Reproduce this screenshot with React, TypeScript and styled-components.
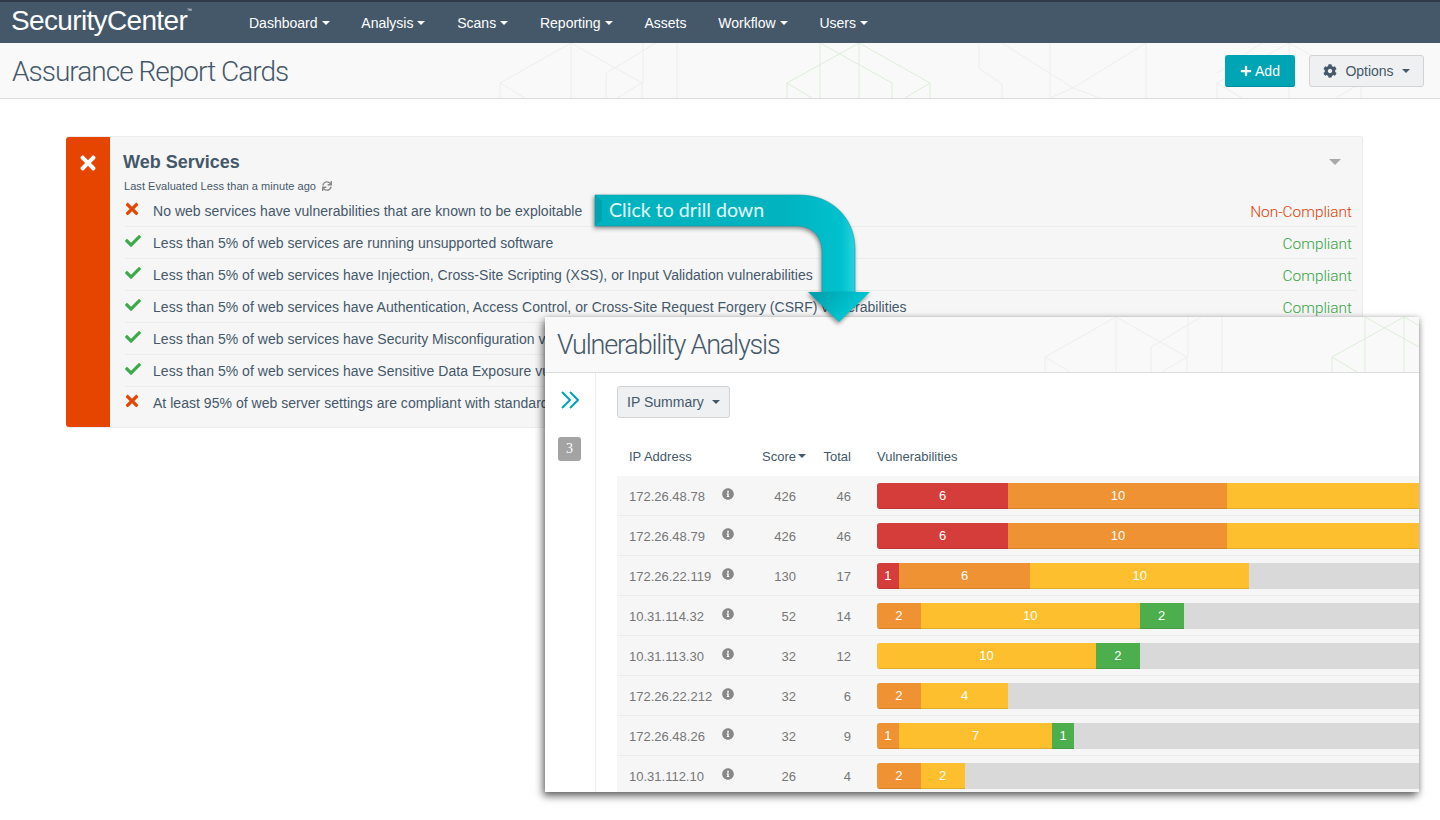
import { FunctionComponent } from "react";
import styled, { createGlobalStyle } from "styled-components";
import { FaCheck, FaCog, FaInfoCircle, FaPlus, FaSync, FaTimes } from "react-icons/fa";

const SANS = `"Liberation Sans", Arial, sans-serif`;
const LIGHT = `Roboto, "Liberation Sans", sans-serif`;

const Global = createGlobalStyle`
    html, body {
        margin: 0;
        height: 820px;
        overflow: hidden;
        background: #fff;
        font-family: ${SANS};
    }
`

const Page = styled.div`
    position: relative;
    width: 1440px;
    height: 820px;
    overflow: hidden;
`

const NavBar = styled.div`
    display: flex;
    align-items: center;
    height: 41px;
    border-top: 2px solid #2f3b48;
    background: #44586a;
    color: #fff;
`

const Logo = styled.div`
    flex: none;
    width: 249px;
    padding-left: 11px;
    box-sizing: border-box;
    font-size: 28px;
    letter-spacing: -0.65px;
    margin-top: -4px;
    sup {
        font-size: 5px;
        vertical-align: 18px;
    }
`

const NavItems = styled.div`
    display: flex;
    gap: 31.8px;
`

const NavItem = styled.div`
    display: flex;
    align-items: center;
    gap: 4px;
    font-size: 14px;
`

const Caret = styled.i<{ $size?: number, $color?: string }>`
    display: block;
    width: 0;
    height: 0;
    border-style: solid;
    border-color: ${p => p.$color || "currentColor"} transparent transparent;
    border-width: ${p => p.$size || 4}px ${p => p.$size || 4}px 0;
`

const PageHead = styled.div`
    position: relative;
    display: flex;
    align-items: center;
    justify-content: space-between;
    height: 55px;
    padding: 0 16px 0 12px;
    background: #f9f9f9;
    border-bottom: 1px solid #dcdcdc;
    overflow: hidden;
`

const PageTitle = styled.div`
    position: relative;
    margin-top: 1px;
    font-family: ${LIGHT};
    font-weight: 300;
    font-size: 28px;
    letter-spacing: -0.98px;
    color: #44586a;
`

const Pattern = styled.svg`
    position: absolute;
    left: 0;
    top: 0;
    width: 1440px;
    height: 55px;
    fill: none;
`

const HeadActions = styled.div`
    position: relative;
    display: flex;
    gap: 14px;
`

const AddButton = styled.div`
    display: flex;
    align-items: center;
    justify-content: center;
    gap: 3px;
    width: 70px;
    height: 32px;
    border-radius: 3px;
    background: #00a5b5;
    box-shadow: inset 0 -1px 0 #008d9b;
    color: #fff;
    font-size: 14px;
`

const GreyButton = styled.div<{ $width: number }>`
    display: flex;
    align-items: center;
    justify-content: center;
    gap: 8px;
    width: ${p => p.$width}px;
    height: 32px;
    box-sizing: border-box;
    border: 1px solid #d0d2d4;
    border-radius: 3px;
    background: #eef0f2;
    color: #44586a;
    font-size: 14px;
`

const Card = styled.div`
    display: flex;
    width: 1297px;
    height: 292px;
    margin: 37px 0 0 66px;
    box-sizing: border-box;
    border: 1px solid #ececec;
    border-left: 0;
    border-radius: 3px;
    background: #f6f6f6;
`

const CardFlag = styled.div`
    display: flex;
    justify-content: center;
    flex: none;
    width: 44px;
    padding-top: 15px;
    box-sizing: border-box;
    border-radius: 3px 0 0 3px;
    background: #e64500;
    color: #fff;
    font-size: 22px;
`

const CardBody = styled.div`
    flex: 1;
    padding: 0 5px 0 15px;
`

const CardHead = styled.div`
    display: flex;
    align-items: flex-start;
    justify-content: space-between;
    height: 40px;
    box-sizing: border-box;
    padding: 15px 16px 0 0;
    margin-left: -2px;
`

const CardTitle = styled.div`
    font-size: 18px;
    font-weight: bold;
    color: #44586a;
`

const CardCaret = styled(Caret)`
    margin-top: 7px;
`

const Evaluated = styled.div`
    display: flex;
    align-items: center;
    gap: 6px;
    height: 18px;
    margin-left: -1px;
    font-size: 11px;
    letter-spacing: 0.05px;
    color: #44586a;
    svg {
        color: #888;
    }
`

const Rule = styled.div`
    display: flex;
    align-items: center;
    height: 31px;
    padding-right: 5px;
    border-bottom: 1px solid #ececec;
    font-size: 14px;
    letter-spacing: 0.03px;
    color: #44586a;
    &:last-child {
        border-bottom: 0;
    }
`

const RuleIcon = styled.div<{ $ok: boolean }>`
    display: flex;
    flex: none;
    width: ${p => p.$ok ? 28 : 30}px;
    margin: -4px 0 0 ${p => p.$ok ? 0 : -2}px;
    font-size: ${p => p.$ok ? 16 : 18}px;
    color: ${p => p.$ok ? "#3eaa4c" : "#e64500"};
`

const RuleText = styled.div`
    flex: 1;
    white-space: nowrap;
`

const RuleStatus = styled.div<{ $ok: boolean }>`
    font-family: ${LIGHT};
    font-weight: 300;
    font-size: 15.4px;
    letter-spacing: 0;
    margin-top: 3px;
    color: ${p => p.$ok ? "#2fa53f" : "#e03c00"};
`

const Panel = styled.div`
    position: absolute;
    left: 545px;
    top: 317px;
    width: 874px;
    height: 475px;
    overflow: hidden;
    background: #fff;
    box-shadow: -2px 4px 8px rgba(0, 0, 0, 0.6), 1px 0 5px rgba(0, 0, 0, 0.15);
`

const PanelTitle = styled(PageTitle)`
    margin-top: 0;
    font-size: 27px;
    letter-spacing: -1.2px;
`

const PanelMain = styled.div`
    display: flex;
    height: 420px;
`

const Side = styled.div`
    display: flex;
    flex-direction: column;
    align-items: center;
    flex: none;
    width: 50px;
    padding: 18px 0 0 0;
    border-right: 1px solid #eceeef;
`

const SideArrows = styled.svg`
    display: block;
    width: 18px;
    height: 18px;
    fill: none;
    stroke: #00a5b5;
    stroke-width: 2;
`

const SideBadge = styled.div`
    display: flex;
    align-items: center;
    justify-content: center;
    width: 23px;
    height: 24px;
    margin: 28px 1px 0 0;
    border-radius: 3px;
    background: #a3a3a3;
    color: #fff;
    font-family: "Liberation Serif", serif;
    font-size: 14px;
`

const Content = styled.div`
    flex: 1;
    padding: 13px 0 0 21px;
`

const RowGrid = `
    display: grid;
    grid-template-columns: 93px 12px 62px 55px 1100px;
    align-items: center;
    padding-left: 12px;
`

const HeadRow = styled.div`
    ${RowGrid}
    height: 58px;
    padding-top: 18px;
    box-sizing: border-box;
    font-size: 13px;
    color: #44586a;
`

const HeadScore = styled.div`
    display: flex;
    align-items: center;
    justify-content: flex-end;
    gap: 2px;
    margin-right: -10px;
`

const HeadTotal = styled.div`
    text-align: right;
`

const HeadVuln = styled.div`
    padding-left: 26px;
`

const Row = styled.div`
    ${RowGrid}
    height: 40px;
    padding-top: 1px;
    box-sizing: border-box;
    border-bottom: 1px solid #ececec;
    background: #f6f6f6;
    font-size: 13px;
    color: #777;
`

const Info = styled.div`
    display: flex;
    margin-top: -4px;
    font-size: 12px;
    color: #888;
`

const Num = styled.div`
    text-align: right;
`

const Bar = styled.div`
    display: flex;
    height: 26px;
    margin: -1px 0 0 26px;
    border-radius: 3px;
    overflow: hidden;
    background: #d9d9d9;
`

const Segment = styled.div<{ $n: number, $color: string }>`
    flex: none;
    width: ${p => p.$n * 21.9}px;
    background: ${p => p.$color};
    box-shadow: inset 0 -1px 0 rgba(0, 0, 0, 0.1);
    color: #fff;
    font-size: 13px;
    line-height: 25px;
    text-align: center;
`

const Callout = styled.div`
    position: absolute;
    left: 594px;
    top: 194px;
    width: 280px;
    height: 132px;
`

const CalloutArrow = styled.svg`
    position: absolute;
    left: 0;
    top: 0;
    width: 280px;
    height: 132px;
    overflow: visible;
    filter: drop-shadow(-1px 2px 2px rgba(0, 0, 0, 0.45));
`

const CalloutText = styled.div`
    position: relative;
    padding: 4px 0 0 15px;
    font-family: Lato, sans-serif;
    font-size: 19.6px;
    color: #e4fbfc;
`

const SEVERITY: { [k: string]: string } = {
    r: "#d43d3a",
    o: "#ef9234",
    y: "#fdbf2d",
    g: "#4cae4c",
}

const RULES = [
    { ok: false, text: "No web services have vulnerabilities that are known to be exploitable" },
    { ok: true, text: "Less than 5% of web services are running unsupported software" },
    { ok: true, text: "Less than 5% of web services have Injection, Cross-Site Scripting (XSS), or Input Validation vulnerabilities" },
    { ok: true, text: "Less than 5% of web services have Authentication, Access Control, or Cross-Site Request Forgery (CSRF) vulnerabilities" },
    { ok: true, text: "Less than 5% of web services have Security Misconfiguration vulnerabilities" },
    { ok: true, text: "Less than 5% of web services have Sensitive Data Exposure vulnerabilities" },
    { ok: false, text: "At least 95% of web server settings are compliant with standards" },
]

const HOSTS: { ip: string, score: number, total: number, bars: [string, number][] }[] = [
    { ip: "172.26.48.78", score: 426, total: 46, bars: [["r", 6], ["o", 10], ["y", 30]] },
    { ip: "172.26.48.79", score: 426, total: 46, bars: [["r", 6], ["o", 10], ["y", 30]] },
    { ip: "172.26.22.119", score: 130, total: 17, bars: [["r", 1], ["o", 6], ["y", 10]] },
    { ip: "10.31.114.32", score: 52, total: 14, bars: [["o", 2], ["y", 10], ["g", 2]] },
    { ip: "10.31.113.30", score: 32, total: 12, bars: [["y", 10], ["g", 2]] },
    { ip: "172.26.22.212", score: 32, total: 6, bars: [["o", 2], ["y", 4]] },
    { ip: "172.26.48.26", score: 32, total: 9, bars: [["o", 1], ["y", 7], ["g", 1]] },
    { ip: "10.31.112.10", score: 26, total: 4, bars: [["o", 2], ["y", 2]] },
]

const NAV = [
    { label: "Dashboard", menu: true },
    { label: "Analysis", menu: true },
    { label: "Scans", menu: true },
    { label: "Reporting", menu: true },
    { label: "Assets", menu: false },
    { label: "Workflow", menu: true },
    { label: "Users", menu: true },
]

// the faint hexagon lines behind both page headers
const HeadPattern: FunctionComponent = () => <Pattern viewBox="0 0 1440 55">
    <g stroke="#eeeeee">
        <path d="M500 40L571 0L642 40M500 40L525 55M642 40L617 55M500 40V55M571 0V55M642 40V55" />
        <path d="M606 55V30L656 0M677 0V55M643 0V40" />
        <path d="M979 0V25L1002 41V55M1002 0L1073 45L1100 55M1146 0L1073 45L1050 55M1050 0V55M1146 0V55" />
        <path d="M1217 40L1289 0L1361 40M1217 40L1242 55M1361 40L1336 55M1217 40V55M1289 0V55M1361 40V55M1262 0L1217 30" />
    </g>
    <g stroke="#dcefd8">
        <path d="M787 40L859 0L930 40M787 40L812 55M930 40L905 55M787 40V55M820 0V55M859 0V55M892 40V55M930 40V55M820 0L892 40" />
    </g>
</Pattern>

export default function App() {
    return <Page>
        <Global />
        <NavBar>
            <Logo>SecurityCenter<sup>™</sup></Logo>
            <NavItems>
                {NAV.map(n => <NavItem key={n.label}>{n.label}{n.menu && <Caret />}</NavItem>)}
            </NavItems>
        </NavBar>
        <PageHead>
            <HeadPattern />
            <PageTitle>Assurance Report Cards</PageTitle>
            <HeadActions>
                <AddButton><FaPlus size={12} />Add</AddButton>
                <GreyButton $width={115}><FaCog size={14} />Options<Caret $size={4} /></GreyButton>
            </HeadActions>
        </PageHead>
        <Card>
            <CardFlag><FaTimes /></CardFlag>
            <CardBody>
                <CardHead>
                    <CardTitle>Web Services</CardTitle>
                    <CardCaret $size={6} $color="#a9a9a9" />
                </CardHead>
                <Evaluated>Last Evaluated Less than a minute ago <FaSync size={10} /></Evaluated>
                {RULES.map(r => <Rule key={r.text}>
                    <RuleIcon $ok={r.ok}>{r.ok ? <FaCheck /> : <FaTimes />}</RuleIcon>
                    <RuleText>{r.text}</RuleText>
                    <RuleStatus $ok={r.ok}>{r.ok ? "Compliant" : "Non-Compliant"}</RuleStatus>
                </Rule>)}
            </CardBody>
        </Card>
        <Panel>
            <PageHead>
                <HeadPattern />
                <PanelTitle>Vulnerability Analysis</PanelTitle>
            </PageHead>
            <PanelMain>
                <Side>
                    <SideArrows viewBox="0 0 18 18"><path d="M1 1L9 9L1 17M9 1L17 9L9 17" /></SideArrows>
                    <SideBadge>3</SideBadge>
                </Side>
                <Content>
                    <GreyButton $width={113}>IP Summary<Caret $size={4} /></GreyButton>
                    <HeadRow>
                        <div>IP Address</div>
                        <div />
                        <HeadScore>Score<Caret $size={4} /></HeadScore>
                        <HeadTotal>Total</HeadTotal>
                        <HeadVuln>Vulnerabilities</HeadVuln>
                    </HeadRow>
                    {HOSTS.map(h => <Row key={h.ip}>
                        <div>{h.ip}</div>
                        <Info><FaInfoCircle /></Info>
                        <Num>{h.score}</Num>
                        <Num>{h.total}</Num>
                        <Bar>
                            {h.bars.map(([c, n], i) => <Segment key={i} $n={n} $color={SEVERITY[c]}>{n < 30 && n}</Segment>)}
                        </Bar>
                    </Row>)}
                </Content>
            </PanelMain>
        </Panel>
        <Callout>
            <CalloutArrow viewBox="0 0 280 132">
                <defs>
                    <linearGradient id="bandFill" gradientUnits="userSpaceOnUse" x1="190" y1="0" x2="262" y2="0">
                        <stop offset="0" stopColor="#00b3bf" />
                        <stop offset="0.8" stopColor="#00c1cd" />
                        <stop offset="1" stopColor="#2ad4dd" />
                    </linearGradient>
                    <linearGradient id="headFill" gradientUnits="userSpaceOnUse" x1="225" y1="98" x2="255" y2="128">
                        <stop offset="0" stopColor="#00a2ad" />
                        <stop offset="1" stopColor="#00ccd8" />
                    </linearGradient>
                </defs>
                <path d="M1 1H205C238 1 261 24 261 55V98H228V58C228 42 218 32 202 32H1Z" fill="url(#bandFill)" stroke="#0a9fa9" strokeWidth="0.6" />
                <path d="M214 98H276L245 128Z" fill="url(#headFill)" />
                <path d="M1 1L8 7V26L1 32Z" fill="#00a4ae" />
            </CalloutArrow>
            <CalloutText>Click to drill down</CalloutText>
        </Callout>
    </Page>
}
